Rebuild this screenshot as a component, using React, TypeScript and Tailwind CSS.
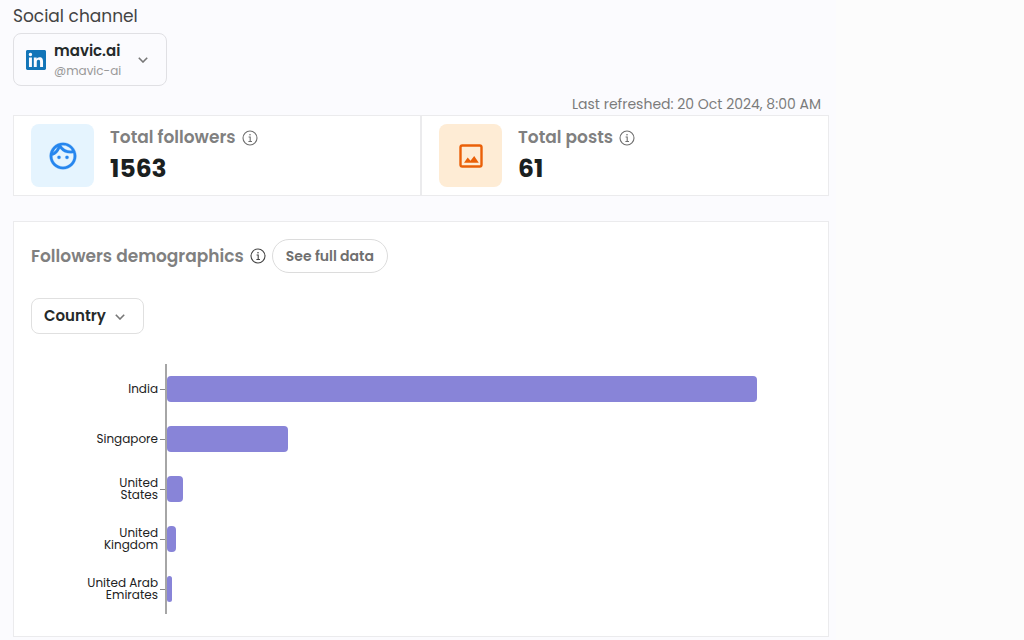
import React, { useState } from 'react';

interface CountryRow {
  label: string;
  followers: number;
}

const COUNTRIES: CountryRow[] = [
  { label: 'India', followers: 591 },
  { label: 'Singapore', followers: 121 },
  { label: 'United\nStates', followers: 16 },
  { label: 'United\nKingdom', followers: 9 },
  { label: 'United Arab\nEmirates', followers: 5 },
];

const AXIS_MAX = 645;

const LinkedInIcon: React.FC = () => (
  <svg viewBox="0 0 24 24" className="size-5" fill="#1275b8" aria-hidden="true">
    <path d="M20.447 20.452h-3.554v-5.569c0-1.328-.027-3.037-1.852-3.037-1.853 0-2.136 1.445-2.136 2.939v5.667H9.351V9h3.414v1.561h.046c.477-.9 1.637-1.85 3.37-1.85 3.601 0 4.267 2.37 4.267 5.455v6.286zM5.337 7.433a2.062 2.062 0 0 1-2.063-2.065 2.064 2.064 0 1 1 2.063 2.065zm1.782 13.019H3.555V9h3.564v11.452zM22.225 0H1.771C.792 0 0 .774 0 1.729v20.542C0 23.227.792 24 1.771 24h20.451C23.2 24 24 23.227 24 22.271V1.729C24 .774 23.2 0 22.222 0h.003z" />
  </svg>
);

const FaceIcon: React.FC = () => (
  <svg viewBox="0 0 24 24" className="size-8" fill="#2686ee" stroke="#2686ee" strokeWidth="0.2" aria-hidden="true">
    <path d="M10.25 13a1.25 1.25 0 1 1-2.5 0 1.25 1.25 0 0 1 2.5 0zM15 11.75a1.25 1.25 0 1 0 0 2.5 1.25 1.25 0 0 0 0-2.5zM22 12c0 5.52-4.48 10-10 10S2 17.52 2 12 6.48 2 12 2s10 4.48 10 10zM10.66 4.12C12.06 6.44 14.6 8 17.5 8c.46 0 .91-.05 1.34-.12C17.44 5.56 14.9 4 12 4c-.46 0-.91.05-1.34.12zM4.42 9.47a8.046 8.046 0 0 0 3.66-4.44 8.046 8.046 0 0 0-3.66 4.44zM20 12c0-.78-.12-1.53-.33-2.24-.7.15-1.42.24-2.17.24a10 10 0 0 1-7.76-3.69A10.016 10.016 0 0 1 4 11.86c.01.04 0 .09 0 .14 0 4.41 3.59 8 8 8s8-3.59 8-8z" />
  </svg>
);

const PictureIcon: React.FC = () => (
  <svg viewBox="0 0 24 24" className="size-6" fill="none" aria-hidden="true">
    <rect x="1.5" y="1.5" width="21" height="21" rx="1.8" stroke="#ea6008" strokeWidth="2.4" />
    <path d="M5 18.7l3.7-5.2 2.8 3.2 3.7-4.6 4.6 6.6z" fill="#ea6008" />
  </svg>
);

const ChevronIcon: React.FC<{ className: string }> = ({ className }) => (
  <svg viewBox="0 0 10 6" className={`pointer-events-none h-[6px] w-[10px] ${className}`} fill="none" stroke="#777" strokeWidth="1.6" aria-hidden="true">
    <path d="M0.8 0.8L5 5L9.2 0.8" />
  </svg>
);

const InfoButton: React.FC<{ label: string; className: string }> = ({ label, className }) => (
  <button type="button" aria-label={label} className={className}>
    <svg viewBox="0 0 16 16" className="size-4" fill="none" stroke="currentColor" aria-hidden="true">
      <circle cx="8" cy="8" r="7" strokeWidth="1.1" />
      <path d="M6.6 7H8.2V11.4M6.4 11.5H10" strokeWidth="1.1" />
      <circle cx="8" cy="4.7" r="0.8" fill="currentColor" stroke="none" />
    </svg>
  </button>
);

interface StatProps {
  label: string;
  value: number;
  tint: string;
  icon: React.ReactNode;
}

const Stat: React.FC<StatProps> = ({ label, value, tint, icon }) => (
  <div className="flex flex-1 gap-4 px-[17px] py-2">
    <div className={`flex size-[63px] items-center justify-center rounded-lg ${tint}`}>{icon}</div>
    <div>
      <div className="flex h-7 items-center gap-1.5">
        <h2 className="text-[17px] font-semibold text-[#808080]">{label}</h2>
        <InfoButton label={`About ${label.toLowerCase()}`} className="text-[#6f6f6f]" />
      </div>
      <p className="text-[25px] leading-[34px] font-bold text-[#1a2020]">{value}</p>
    </div>
  </div>
);

const CountryChart: React.FC = () => (
  <div className="mt-[30px]">
    {COUNTRIES.map(row => (
      <div key={row.label} className="flex h-[50px] items-center">
        <div className="w-[127px] text-right text-xs leading-3 whitespace-pre-line text-[#222]">{row.label}</div>
        <div className="ml-[2px] h-px w-[5px] bg-[#888]" />
        <div className="flex h-full flex-1 items-center border-l-2 border-[#a6a6a6]">
          <div className="h-[26px] rounded bg-[#8884d8]" style={{ width: `${(row.followers / AXIS_MAX) * 100}%` }} />
        </div>
      </div>
    ))}
  </div>
);

export default function App() {
  const [channel, setChannel] = useState('mavic.ai');
  const [dimension, setDimension] = useState('Country');

  return (
    <div className="flex min-h-screen bg-[#fcfcfc] font-['Poppins','Inter',sans-serif]">
      <main className="mr-[188px] flex-1 bg-[#fbfbfe] pt-1 pr-[7px] pb-[2px] pl-[13px]">
        <label htmlFor="channel" className="block text-[17px] leading-6 text-[#444]">Social channel</label>

        <div className="relative mt-[5px] w-[154px]">
          <select
            id="channel"
            value={channel}
            onChange={e => setChannel(e.target.value)}
            className="block h-[53px] w-full appearance-none rounded-lg border border-[#e0e0e4] pb-[18px] pl-10 text-[15px] leading-6 font-semibold text-[#252a2a]"
          >
            <option>mavic.ai</option>
          </select>
          <div className="pointer-events-none absolute inset-y-0 left-[13px] flex items-center">
            <LinkedInIcon />
          </div>
          <span className="pointer-events-none absolute bottom-[7px] left-[41px] text-xs text-[#999]">@mavic-ai</span>
          <ChevronIcon className="absolute top-6 right-[19px]" />
        </div>

        <p className="mt-2 pr-2 text-right text-sm leading-[21px] text-[#7b7b7b]">Last refreshed: 20 Oct 2024, 8:00 AM</p>

        <section className="flex divide-x-2 divide-[#ebebed] border border-[#ebebed] bg-white">
          <Stat label="Total followers" value={1563} tint="bg-[#e5f4fe]" icon={<FaceIcon />} />
          <Stat label="Total posts" value={61} tint="bg-[#feecd5]" icon={<PictureIcon />} />
        </section>

        <section className="mt-[25px] border border-[#ebebed] bg-white px-[17px] pt-[17px] pb-[22px]">
          <div className="flex items-center gap-1.5">
            <h2 className="text-[17px] leading-6 font-semibold text-[#808080]">Followers demographics</h2>
            <InfoButton label="About followers demographics" className="text-[#444]" />
            <button type="button" className="h-[34px] rounded-full border border-[#dcdcdc] px-[13px] text-sm font-semibold text-[#6f6f6f]">
              See full data
            </button>
          </div>

          <div className="relative mt-[25px] w-[113px]">
            <select
              aria-label="Group followers by"
              value={dimension}
              onChange={e => setDimension(e.target.value)}
              className="block h-9 w-full appearance-none rounded-lg border border-[#e0e0e0] pl-3 text-[15px] font-semibold text-[#252a2a]"
            >
              <option>Country</option>
            </select>
            <ChevronIcon className="absolute top-4 right-[19px]" />
          </div>

          <CountryChart />
        </section>
      </main>
    </div>
  );
}
